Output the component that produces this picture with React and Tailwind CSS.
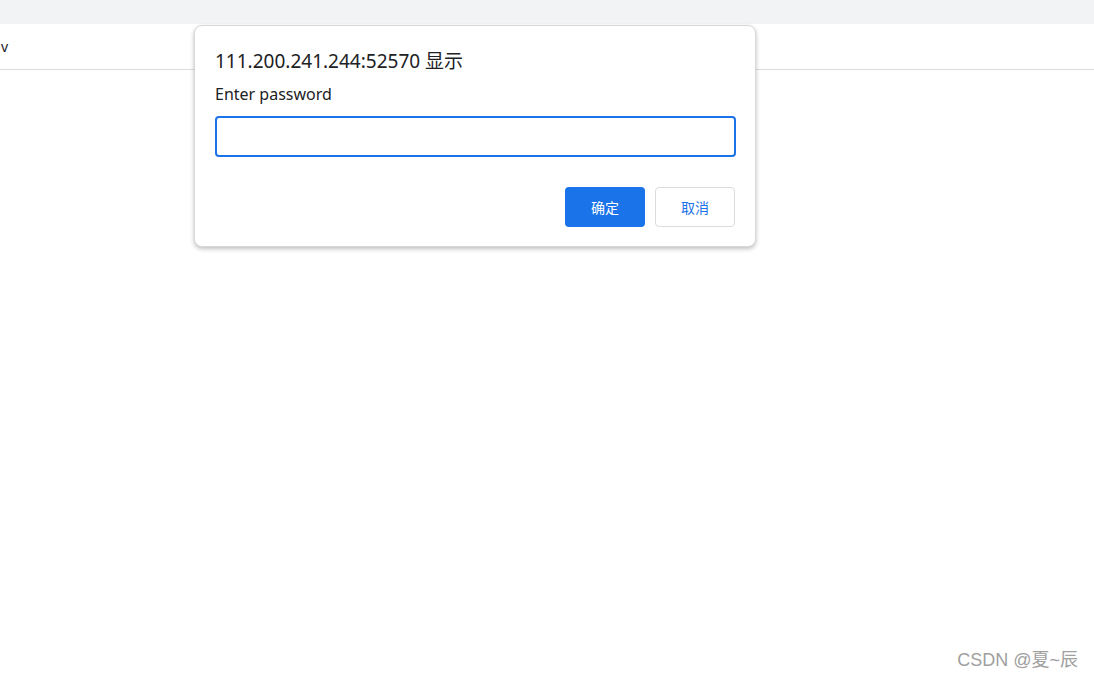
export default function App() {
  const font = { fontFamily: '"Noto Sans", "Noto Sans CJK SC", sans-serif' };
  return (
    <div className="relative w-[1094px] h-[682px] bg-white overflow-hidden" style={font}>
      <div className="h-[24px] bg-[#f1f3f4]" />
      <div className="h-[46px] border-b border-[#dadce0] flex items-center text-[14px] text-[#202124] pl-[1px]">
        v
      </div>
      <div className="absolute left-[194px] top-[25px] w-[562px] h-[222px] bg-white rounded-[8px] border border-[#d8d8d8] shadow-[0_2px_4px_rgba(0,0,0,0.25)] px-[20px] pt-[21px]">
        <div className="text-[19px] leading-[28px] text-[#202124]">111.200.241.244:52570 显示</div>
        <div className="text-[16px] leading-[20px] text-[#202124] mt-[9px]">Enter password</div>
        <div className="mt-[12px] h-[41px] w-[521px] rounded-[4px] border-2 border-[#1a73e8]" />
        <div className="flex justify-end gap-[10px] mt-[30px]">
          <button className="w-[80px] h-[40px] rounded-[4px] bg-[#1a73e8] text-white text-[14px]">确定</button>
          <button className="w-[80px] h-[40px] rounded-[4px] border border-[#dadce0] bg-white text-[#1a73e8] text-[14px]">取消</button>
        </div>
      </div>
      <div className="absolute right-[16px] bottom-[8px] text-[18px] text-[#a0a0a0]" style={{ fontFamily: '"Liberation Sans", "Noto Sans CJK SC", sans-serif' }}>
        CSDN @夏~辰
      </div>
    </div>
  );
}
